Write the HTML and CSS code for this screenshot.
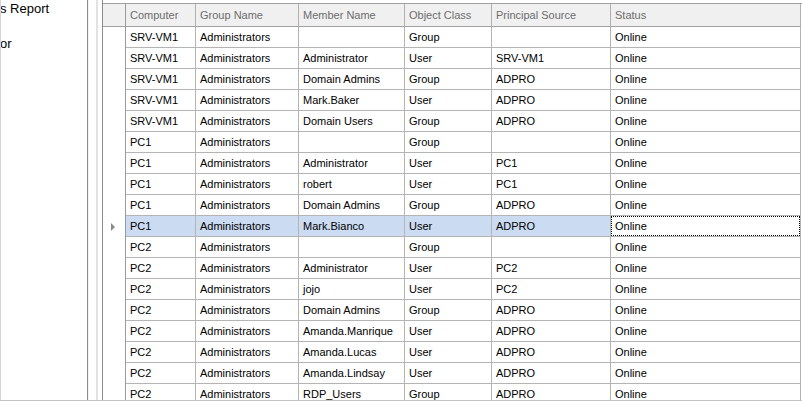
FILE: index.html
```html
<!DOCTYPE html>
<html>
<head>
<meta charset="utf-8">
<link rel="stylesheet" href="styles.css">
</head>
<body>
<div class="window">
  <div class="tree">
    <div class="node n1">s Report</div>
    <div class="node n2">or</div>
  </div>
  <div class="splitter"><div class="grip"></div></div>
  <div class="grid">
    <div class="row head">
      <div class="cell rh"></div>
      <div class="cell">Computer</div>
      <div class="cell">Group Name</div>
      <div class="cell">Member Name</div>
      <div class="cell">Object Class</div>
      <div class="cell">Principal Source</div>
      <div class="cell">Status</div>
    </div>
    <div class="row"><div class="cell rh"></div><div class="cell">SRV-VM1</div><div class="cell">Administrators</div><div class="cell"></div><div class="cell">Group</div><div class="cell"></div><div class="cell">Online</div></div>
    <div class="row"><div class="cell rh"></div><div class="cell">SRV-VM1</div><div class="cell">Administrators</div><div class="cell">Administrator</div><div class="cell">User</div><div class="cell">SRV-VM1</div><div class="cell">Online</div></div>
    <div class="row"><div class="cell rh"></div><div class="cell">SRV-VM1</div><div class="cell">Administrators</div><div class="cell">Domain Admins</div><div class="cell">Group</div><div class="cell">ADPRO</div><div class="cell">Online</div></div>
    <div class="row"><div class="cell rh"></div><div class="cell">SRV-VM1</div><div class="cell">Administrators</div><div class="cell">Mark.Baker</div><div class="cell">User</div><div class="cell">ADPRO</div><div class="cell">Online</div></div>
    <div class="row"><div class="cell rh"></div><div class="cell">SRV-VM1</div><div class="cell">Administrators</div><div class="cell">Domain Users</div><div class="cell">Group</div><div class="cell">ADPRO</div><div class="cell">Online</div></div>
    <div class="row"><div class="cell rh"></div><div class="cell">PC1</div><div class="cell">Administrators</div><div class="cell"></div><div class="cell">Group</div><div class="cell"></div><div class="cell">Online</div></div>
    <div class="row"><div class="cell rh"></div><div class="cell">PC1</div><div class="cell">Administrators</div><div class="cell">Administrator</div><div class="cell">User</div><div class="cell">PC1</div><div class="cell">Online</div></div>
    <div class="row"><div class="cell rh"></div><div class="cell">PC1</div><div class="cell">Administrators</div><div class="cell">robert</div><div class="cell">User</div><div class="cell">PC1</div><div class="cell">Online</div></div>
    <div class="row"><div class="cell rh"></div><div class="cell">PC1</div><div class="cell">Administrators</div><div class="cell">Domain Admins</div><div class="cell">Group</div><div class="cell">ADPRO</div><div class="cell">Online</div></div>
    <div class="row selected"><div class="cell rh"><span class="arrow"></span></div><div class="cell">PC1</div><div class="cell">Administrators</div><div class="cell">Mark.Bianco</div><div class="cell">User</div><div class="cell">ADPRO</div><div class="cell focus"><span class="focus-box">Online</span></div></div>
    <div class="row"><div class="cell rh"></div><div class="cell">PC2</div><div class="cell">Administrators</div><div class="cell"></div><div class="cell">Group</div><div class="cell"></div><div class="cell">Online</div></div>
    <div class="row"><div class="cell rh"></div><div class="cell">PC2</div><div class="cell">Administrators</div><div class="cell">Administrator</div><div class="cell">User</div><div class="cell">PC2</div><div class="cell">Online</div></div>
    <div class="row"><div class="cell rh"></div><div class="cell">PC2</div><div class="cell">Administrators</div><div class="cell">jojo</div><div class="cell">User</div><div class="cell">PC2</div><div class="cell">Online</div></div>
    <div class="row"><div class="cell rh"></div><div class="cell">PC2</div><div class="cell">Administrators</div><div class="cell">Domain Admins</div><div class="cell">Group</div><div class="cell">ADPRO</div><div class="cell">Online</div></div>
    <div class="row"><div class="cell rh"></div><div class="cell">PC2</div><div class="cell">Administrators</div><div class="cell">Amanda.Manrique</div><div class="cell">User</div><div class="cell">ADPRO</div><div class="cell">Online</div></div>
    <div class="row"><div class="cell rh"></div><div class="cell">PC2</div><div class="cell">Administrators</div><div class="cell">Amanda.Lucas</div><div class="cell">User</div><div class="cell">ADPRO</div><div class="cell">Online</div></div>
    <div class="row"><div class="cell rh"></div><div class="cell">PC2</div><div class="cell">Administrators</div><div class="cell">Amanda.Lindsay</div><div class="cell">User</div><div class="cell">ADPRO</div><div class="cell">Online</div></div>
    <div class="row"><div class="cell rh"></div><div class="cell">PC2</div><div class="cell">Administrators</div><div class="cell">RDP_Users</div><div class="cell">Group</div><div class="cell">ADPRO</div><div class="cell">Online</div></div>
  </div>
</div>
</body>
</html>
```
FILE: styles.css
```css
html, body {
  margin: 0;
  padding: 0;
  background: #ffffff;
  overflow: hidden;
}
.window {
  width: 802px;
  height: 401px;
  box-sizing: border-box;
  border-bottom: 1px solid #c4c4c4;
  display: flex;
  overflow: hidden;
  font-family: "Liberation Sans", Arial, sans-serif;
}
.tree {
  width: 88px;
  flex: none;
  box-sizing: border-box;
  border-left: 1px solid #d6d6d6;
  border-right: 1px solid #8a8a8a;
  overflow: hidden;
  white-space: nowrap;
  font-size: 13px;
  color: #000;
}
.node {
  height: 18px;
  line-height: 18px;
  margin-left: -1px;
}
.n1 { margin-top: 0; }
.n2 { margin-top: 17px; }
.splitter {
  width: 14px;
  flex: none;
  box-sizing: border-box;
  border-left: 1px solid #f4f4f4;
  display: flex;
  padding-left: 7px;
}
.grip {
  width: 2px;
  background: #e2e2e2;
}
.grid {
  flex: none;
  width: 700px;
  box-sizing: border-box;
  border-left: 1px solid #8c8c8c;
  padding-top: 3px;
  font-size: 11px;
  color: #000;
}
.row {
  display: grid;
  grid-template-columns: 23px 70px 103px 106px 87px 119px 190px;
  height: 21px;
}
.cell {
  box-sizing: border-box;
  border-right: 1px solid #b4b4b4;
  border-bottom: 1px solid #b4b4b4;
  padding-left: 4px;
  line-height: 20px;
  white-space: nowrap;
  overflow: hidden;
}
.cell.rh {
  border-bottom: none;
  border-right: 1px solid #9a9a9a;
  padding-left: 0;
  display: flex;
  align-items: center;
}
.row.head {
  height: 24px;
  border-top: 1px solid #a0a0a0;
  box-sizing: border-box;
}
.row.head .cell {
  background: #f0f0f0;
  color: #6d6d6d;
  line-height: 22px;
  border-bottom: 1px solid #a0a0a0;
  border-right: 1px solid #b0b0b0;
}
.row.head .cell.rh {
  border-right: 1px solid #9a9a9a;
}
.row.selected .cell {
  background: #cbdbf2;
}
.row.selected .cell.rh {
  background: #fff;
}
.row.selected .cell.focus {
  background: #fff;
  padding: 0 0 1px 0;
}
.focus-box {
  display: block;
  height: 20px;
  box-sizing: border-box;
  border: 1px dotted #000;
  padding-left: 3px;
  line-height: 18px;
}
.arrow {
  margin-left: 8px;
  width: 0;
  height: 0;
  border-top: 4px solid transparent;
  border-bottom: 4px solid transparent;
  border-left: 4px solid #8a8a8a;
}
```
